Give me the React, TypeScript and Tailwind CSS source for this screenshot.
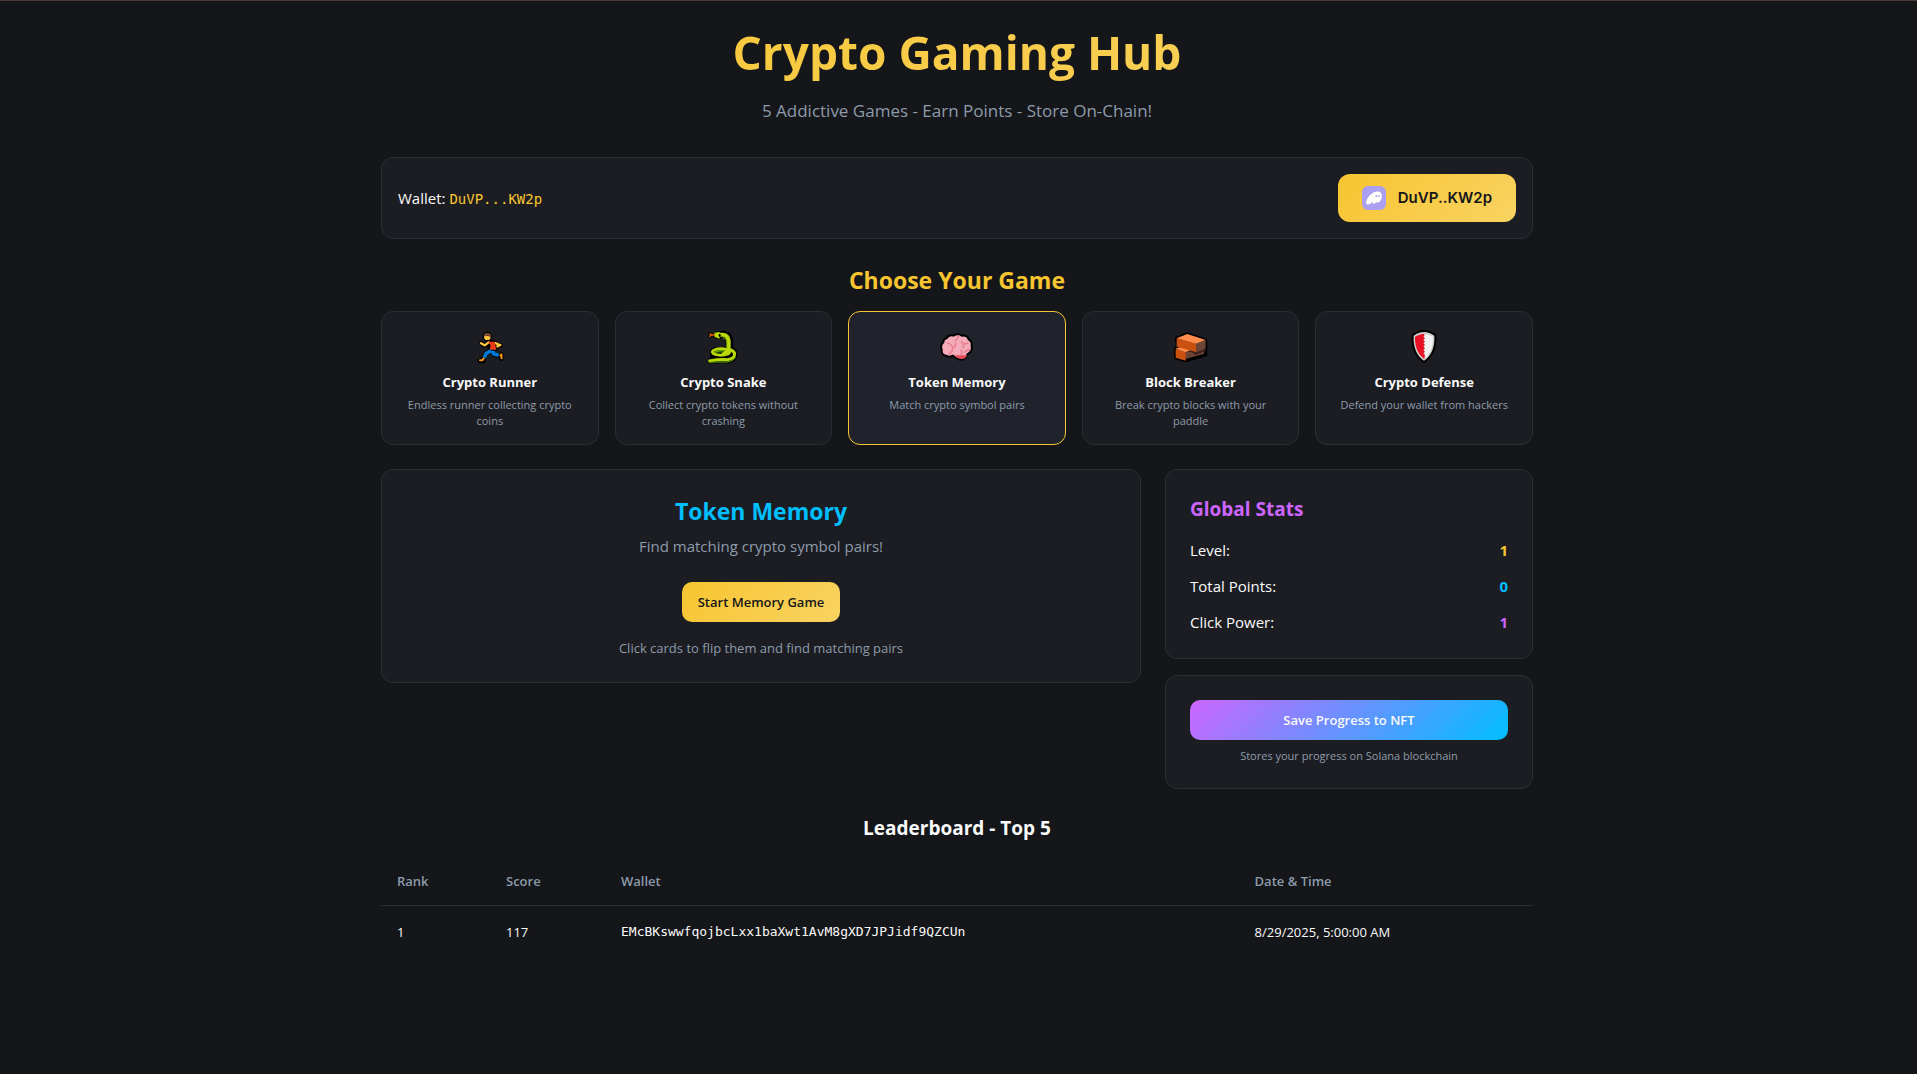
import React, { useState } from 'react';
import { clsx } from 'clsx';

interface Game {
    id: string;
    name: string;
    description: string;
    icon: React.ReactNode;
}

interface LeaderboardEntry {
    score: number;
    wallet: string;
    date: string;
}

const iconProps = {
    viewBox: '0 0 120 108',
    className: 'w-10 h-9',
    'aria-hidden': true,
};

const RunnerIcon = () => (
    <svg {...iconProps} fill="none" strokeLinecap="round" strokeLinejoin="round">
        <g stroke="#000">
            <circle cx="52" cy="25" r="11" fill="#000" strokeWidth="6" />
            <path d="M34 46L44 52L58 41L76 45L82 53L91 52" strokeWidth="14" />
            <path d="M58 44L72 46L76 62L60 62Z" fill="#000" strokeWidth="14" />
            <path d="M64 67L49 76L42 91L30 98L40 100M70 68L70 78L88 84L94 80L94 92" strokeWidth="14" />
        </g>
        <path d="M33 46L44 52L56 43M76 45L86 50L91 51L82 55" stroke="#ffc83d" strokeWidth="7" />
        <circle cx="52" cy="26" r="10" fill="#ffc83d" />
        <path d="M42 25C41 12 62 12 63 22L63 28C60 30 58 25 54 24Z" fill="#6d4534" />
        <path d="M54 41L74 41L79 65L59 65L62 52Z" fill="#f03a17" />
        <path d="M64 68L49 76L43 89M70 68L70 77L86 82" stroke="#0078d7" strokeWidth="11" strokeLinecap="butt" />
        <path d="M41 91L37 97L30 97M91 82L94 79L95 91" stroke="#f7941d" strokeWidth="6" />
    </svg>
);

const SnakeIcon = () => (
    <svg {...iconProps} fill="none" strokeLinecap="round" strokeLinejoin="round">
        <g stroke="#000">
            <path d="M44 21L60 20Q77 21 79 38V60" strokeWidth="23" />
            <path d="M30 62L82 60Q101 66 99 82Q96 99 78 102H17L26 90Q22 74 30 62Z" fill="#000" strokeWidth="8" />
            <path d="M20 17L23 21L20 25M24 21H34" strokeWidth="9" />
        </g>
        <path d="M21 17L24 21L20 25M24 21H34" stroke="#f7630c" strokeWidth="4" />
        <path d="M20 99Q44 94 72 95Q94 93 95 78Q94 70 84 66" stroke="#bad80a" strokeWidth="9" />
        <path d="M20 102H70Q90 101 97 88" stroke="#6bb700" strokeWidth="3" />
        <ellipse cx="54" cy="72" rx="26" ry="10" fill="#1f3d00" stroke="#bad80a" strokeWidth="8" />
        <path d="M36 73Q54 64 70 71" stroke="#6bb700" strokeWidth="4" />
        <path d="M46 20L60 20Q75 21 77 38V60Q76 72 62 78" stroke="#bad80a" strokeWidth="12" />
        <path d="M34 14L50 12V32L35 27Z" fill="#bad80a" />
        <path d="M60 30Q72 30 72 42V58" stroke="#8dc800" strokeWidth="3" />
        <ellipse cx="50" cy="22" rx="3" ry="5" fill="#000" />
    </svg>
);

const BrainIcon = () => (
    <svg {...iconProps} fill="none" strokeLinecap="round" strokeLinejoin="round">
        <path
            d="M28 31Q36 19 49 23Q62 14 75 23Q91 21 95 34Q106 40 104 53Q108 70 91 79Q87 94 73 95Q57 94 48 83Q39 89 27 83Q12 81 14 65Q9 52 19 43Q19 33 28 31Z"
            fill="#f4abba"
            stroke="#000"
            strokeWidth="6"
        />
        <path d="M53 82H91Q86 93 74 93Q62 93 53 82Z" fill="#e74856" />
        <path
            d="M31 45Q46 48 47 61Q47 73 36 77M56 46Q55 60 46 61M54 39Q62 31 65 24M73 42Q80 51 93 45M79 50V60M99 64Q90 66 83 72M72 67Q81 76 68 82"
            stroke="#e88491"
            strokeWidth="5"
        />
    </svg>
);

const BrickIcon = () => (
    <svg {...iconProps}>
        <path
            d="M17 31L49 18L104 36V81L44 98L14 89V62L19 59Z"
            fill="#6b4435"
            stroke="#000"
            strokeWidth="10"
            strokeLinejoin="round"
        />
        <path d="M14 62L31 56L60 66L44 73Z" fill="#ff8c4a" />
        <path d="M14 62L44 73V98L14 89Z" fill="#ca5010" />
        <path d="M60 66L75 73L104 62V69L74 81L61 71L44 73Z" fill="#3d251e" />
        <path d="M17 31L49 18L104 36L75 47Z" fill="#ff8c4a" />
        <path d="M17 31L75 47V72L17 56Z" fill="#ca5010" />
        <path d="M75 47L104 36V61L75 72Z" fill="#6b4435" />
    </svg>
);

const ShieldIcon = () => (
    <svg {...iconProps} strokeLinejoin="round">
        <path d="M26 22Q42 9 60 9Q78 9 94 22C96 56 84 86 60 102C36 86 24 56 26 22Z" fill="#ccc" stroke="#000" strokeWidth="6" />
        <path d="M61 17Q75 18 87 26C88 55 79 78 61 93Z" fill="#f2f2f2" />
        <path
            d="M33 26Q45 18 61 17V23L58 27L63 31L58 36L63 41L58 46L63 51L58 56L63 61L58 66L63 71L58 76L63 81L61 93C41 78 32 54 33 26Z"
            fill="#e81224"
        />
    </svg>
);

const PhantomIcon = () => (
    <svg viewBox="0 0 128 128" className="w-6 h-6 rounded-md" aria-hidden>
        <rect width="128" height="128" fill="#ab9ff2" />
        <path
            fill="#fffdf8"
            fillRule="evenodd"
            clipRule="evenodd"
            d="M55.64 82.15C50.87 89.45 42.89 98.7 32.26 98.7C27.23 98.7 22.4 96.63 22.4 87.64C22.4 64.76 53.64 29.33 82.63 29.33C99.13 29.33 105.7 40.78 105.7 53.77C105.7 70.45 94.87 89.52 84.12 89.52C80.7 89.52 79.03 87.64 79.03 84.67C79.03 83.89 79.16 83.05 79.41 82.15C75.74 88.42 68.65 94.24 62.02 94.24C57.19 94.24 54.74 91.2 54.74 86.93C54.74 85.38 55.06 83.76 55.64 82.15ZM80.61 53.32C80.61 57.1 78.38 59 75.88 59C73.34 59 71.15 57.1 71.15 53.32C71.15 49.53 73.34 47.64 75.88 47.64C78.38 47.64 80.61 49.53 80.61 53.32ZM94.81 53.32C94.81 57.1 92.58 59 90.08 59C87.54 59 85.34 57.1 85.34 53.32C85.34 49.53 87.54 47.64 90.08 47.64C92.58 47.64 94.81 49.53 94.81 53.32Z"
        />
    </svg>
);

const games: Game[] = [
    { id: 'runner', name: 'Crypto Runner', description: 'Endless runner collecting crypto coins', icon: <RunnerIcon /> },
    { id: 'snake', name: 'Crypto Snake', description: 'Collect crypto tokens without crashing', icon: <SnakeIcon /> },
    { id: 'memory', name: 'Token Memory', description: 'Match crypto symbol pairs', icon: <BrainIcon /> },
    { id: 'breaker', name: 'Block Breaker', description: 'Break crypto blocks with your paddle', icon: <BrickIcon /> },
    { id: 'defense', name: 'Crypto Defense', description: 'Defend your wallet from hackers', icon: <ShieldIcon /> },
];

const stats = [
    { label: 'Level:', value: 1, color: 'text-[#f7c530]' },
    { label: 'Total Points:', value: 0, color: 'text-[#00bfff]' },
    { label: 'Click Power:', value: 1, color: 'text-[#cc66ff]' },
];

const leaderboard: LeaderboardEntry[] = [
    { score: 117, wallet: 'EMcBKswwfqojbcLxx1baXwt1AvM8gXD7JPJidf9QZCUn', date: '8/29/2025, 5:00:00 AM' },
];

const Card: React.FC<{ className?: string; children: React.ReactNode }> = ({ className, children }) => (
    <div className={clsx('rounded-xl border border-[#2b2d35] bg-[#1c1d22]', className)}>{children}</div>
);

const App: React.FC = () => {
    const [activeGame, setActiveGame] = useState('memory');

    return (
        <div className="min-h-screen border-t border-[#4a3b38] bg-[#141619] pr-[3px] font-['Open_Sans','Noto_Sans',sans-serif] text-[15px] leading-6 text-[#fafafa]">
            <div className="mx-auto max-w-6xl py-6">
                <header className="mb-8 text-center">
                    <h1 className="mb-4 bg-linear-135/srgb from-[#f7c530] to-[#f9d362] bg-clip-text pb-0.5 text-[46px] leading-[54px] font-bold text-transparent">
                        Crypto Gaming Hub
                    </h1>
                    <p className="text-[17px] leading-7 text-[#8d9bab]">5 Addictive Games - Earn Points - Store On-Chain!</p>
                </header>

                <Card className="mb-6 flex items-center justify-between p-4">
                    <p>
                        Wallet: <span className="font-['DejaVu_Sans_Mono',monospace] text-[14px] text-[#f7c530]">DuVP...KW2p</span>
                    </p>
                    <button className="flex h-12 items-center gap-3 rounded-xl bg-linear-135/srgb from-[#f7c530] to-[#f9d362] px-6 font-['Inter',sans-serif] font-semibold text-[#141619]">
                        <PhantomIcon />
                        DuVP..KW2p
                    </button>
                </Card>

                <section className="mb-6">
                    <h2 className="mb-[14px] text-center text-[23px] leading-[34px] font-bold text-[#f7c530]">Choose Your Game</h2>
                    <div className="grid grid-cols-5 gap-4">
                        {games.map((game) => (
                            <button
                                key={game.id}
                                onClick={() => setActiveGame(game.id)}
                                className={clsx(
                                    'flex flex-col items-center rounded-xl border px-4 pt-4 pb-[15px] text-center',
                                    game.id === activeGame ? 'border-[#f7c530] bg-[#20232b]' : 'border-[#2b2d35] bg-[#1c1d22]'
                                )}
                            >
                                {game.icon}
                                <span className="mt-2 mb-[5px] text-[13px] leading-5 font-bold">{game.name}</span>
                                <span className="text-[11px] leading-4 text-[#8d9bab]">{game.description}</span>
                            </button>
                        ))}
                    </div>
                </section>

                <div className="grid grid-cols-3 items-start gap-6">
                    <Card className="col-span-2 p-6 text-center">
                        <h2 className="mb-[6px] text-[23px] leading-[34px] font-bold text-[#00bfff]">Token Memory</h2>
                        <p className="mb-6 text-[#8d9bab]">Find matching crypto symbol pairs!</p>
                        <button className="h-10 rounded-[10px] bg-linear-135/srgb from-[#f7c530] to-[#f9d362] px-4 text-[13px] leading-5 font-semibold text-[#141619]">
                            Start Memory Game
                        </button>
                        <p className="mt-4 text-[13px] leading-5 text-[#8d9bab]">Click cards to flip them and find matching pairs</p>
                    </Card>

                    <div className="space-y-4">
                        <Card className="p-6">
                            <h3 className="mb-[14px] text-[19px] leading-[30px] font-bold text-[#cc66ff]">Global Stats</h3>
                            <dl className="space-y-3">
                                {stats.map((stat) => (
                                    <div key={stat.label} className="flex justify-between">
                                        <dt>{stat.label}</dt>
                                        <dd className={clsx('font-bold', stat.color)}>{stat.value}</dd>
                                    </div>
                                ))}
                            </dl>
                        </Card>
                        <Card className="p-6 text-center">
                            <button className="h-10 w-full rounded-[10px] bg-linear-135/srgb from-[#cc66ff] to-[#00bfff] text-[13px] leading-5 font-semibold">
                                Save Progress to NFT
                            </button>
                            <p className="mt-2 text-[11px] leading-4 text-[#8d9bab]">Stores your progress on Solana blockchain</p>
                        </Card>
                    </div>
                </div>

                <section className="mt-6">
                    <h2 className="mb-[14px] text-center text-[19px] leading-[30px] font-bold">Leaderboard - Top 5</h2>
                    <table className="w-full text-left text-[13px] leading-5">
                        <thead>
                            <tr className="h-12 border-b border-[#2b2d35] text-[#8d9bab]">
                                <th className="w-[109px] px-4 font-semibold">Rank</th>
                                <th className="w-[115px] px-4 font-semibold">Score</th>
                                <th className="w-[55%] px-4 font-semibold">Wallet</th>
                                <th className="px-4 font-semibold">Date &amp; Time</th>
                            </tr>
                        </thead>
                        <tbody>
                            {leaderboard.map((entry, index) => (
                                <tr key={entry.wallet}>
                                    <td className="p-4">{index + 1}</td>
                                    <td className="p-4">{entry.score}</td>
                                    <td className="p-4 font-['DejaVu_Sans_Mono',monospace]">{entry.wallet}</td>
                                    <td className="p-4">{entry.date}</td>
                                </tr>
                            ))}
                        </tbody>
                    </table>
                </section>
            </div>
        </div>
    );
};

export default App;
